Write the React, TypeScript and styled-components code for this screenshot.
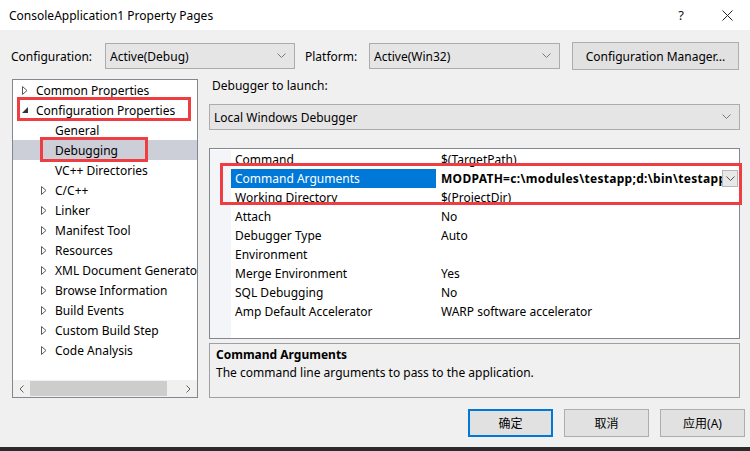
import React from 'react';
import styled, { createGlobalStyle } from 'styled-components';

const GlobalStyle = createGlobalStyle`
    html, body {
        margin: 0;
        padding: 0;
        background: #f0f0f0;
    }
    body {
        font-family: 'Noto Sans', 'Noto Sans CJK SC', sans-serif;
        font-size: 12px;
        color: #000;
    }
`;

const Window = styled.div`
    width: 750px;
    height: 451px;
    display: flex;
    flex-direction: column;
    background: #f0f0f0;
    overflow: hidden;
`;

const TitleBar = styled.div`
    height: 30px;
    flex: none;
    display: flex;
    align-items: center;
    background: #ffffff;
    padding-left: 9px;
    font-size: 12px;
`;

const Title = styled.div`
    flex: 1;
`;

const TitleButton = styled.div`
    width: 46px;
    height: 30px;
    display: flex;
    align-items: center;
    justify-content: center;
    font-size: 13px;
    color: #111;
`;

const ConfigRow = styled.div`
    margin-top: 12px;
    height: 28px;
    display: flex;
    align-items: center;
    padding-left: 11px;
`;

const Label = styled.div<{ $width: number; $gap?: number }>`
    width: ${props => props.$width}px;
    margin-left: ${props => props.$gap || 0}px;
    flex: none;
    white-space: nowrap;
`;

const Select = styled.div<{ $width?: number }>`
    ${props => (props.$width ? `width: ${props.$width}px;` : 'align-self: stretch;')}
    height: 26px;
    box-sizing: border-box;
    flex: none;
    display: flex;
    align-items: center;
    padding: 0 8px 0 4px;
    background: #e5e5e5;
    border: 1px solid #acacac;
`;

const SelectText = styled.div`
    flex: 1;
    white-space: nowrap;
    overflow: hidden;
`;

const Button = styled.div<{ $width: number; $primary?: boolean }>`
    width: ${props => props.$width}px;
    height: 28px;
    box-sizing: border-box;
    flex: none;
    display: flex;
    align-items: center;
    justify-content: center;
    background: #e1e1e1;
    border: ${props => (props.$primary ? '2px solid #0078d7' : '1px solid #adadad')};
    white-space: nowrap;
`;

const ManagerButton = styled(Button)`
    margin-left: 12px;
`;

const Main = styled.div`
    margin-top: 9px;
    height: 319px;
    display: flex;
    padding-left: 12px;
`;

const Tree = styled.div`
    width: 186px;
    box-sizing: border-box;
    border: 1px solid #828790;
    background: #ffffff;
    display: flex;
    flex-direction: column;
`;

const TreeRows = styled.div`
    flex: 1;
    overflow: hidden;
`;

const TreeRow = styled.div<{ $selected?: boolean }>`
    position: relative;
    height: 20px;
    display: flex;
    align-items: center;
    white-space: nowrap;
    background: ${props => (props.$selected ? '#ccced8' : 'transparent')};
`;

const Expander = styled.div<{ $level: number }>`
    width: 14px;
    height: 20px;
    flex: none;
    margin-left: ${props => 9 + props.$level * 19}px;
    display: flex;
    align-items: center;
`;

const RedBox = styled.div<{ $left: number; $top: number; $width: number; $height: number }>`
    position: absolute;
    left: ${props => props.$left}px;
    top: ${props => props.$top}px;
    width: ${props => props.$width}px;
    height: ${props => props.$height}px;
    box-sizing: border-box;
    border: 3px solid #ef3e42;
    pointer-events: none;
`;

const HScroll = styled.div`
    height: 17px;
    flex: none;
    display: flex;
    align-items: center;
    background: #f0f0f0;
`;

const ScrollArrow = styled.div`
    width: 17px;
    height: 17px;
    display: flex;
    align-items: center;
    justify-content: center;
`;

const ScrollThumb = styled.div`
    width: 137px;
    height: 15px;
    background: #cdcdcd;
`;

const ScrollTrack = styled.div`
    flex: 1;
`;

const RightPanel = styled.div`
    width: 531px;
    margin-left: 11px;
    display: flex;
    flex-direction: column;
`;

const SectionLabel = styled.div`
    margin-top: -1px;
    line-height: 16px;
    padding-left: 3px;
`;

const LaunchSelect = styled(Select)`
    margin-top: 10px;
    height: 26px;
`;

const Grid = styled.div`
    position: relative;
    margin-top: 18px;
    height: 191px;
    box-sizing: border-box;
    border: 1px solid #828790;
    background: #ffffff;
    padding-top: 1px;
    display: flex;
    flex-direction: column;
`;

const GridRow = styled.div`
    height: 19px;
    flex: none;
    display: grid;
    grid-template-columns: 21px 206px 1fr;
`;

const Gutter = styled.div`
    background: #f3f5f9;
`;

const GridFill = styled.div`
    flex: 1;
    display: grid;
    grid-template-columns: 21px 1fr;
`;

const NameCell = styled.div<{ $selected?: boolean }>`
    display: flex;
    align-items: center;
    padding-left: 4px;
    margin-right: 1px;
    white-space: nowrap;
    overflow: hidden;
    background: ${props => (props.$selected ? '#0078d7' : 'transparent')};
    color: ${props => (props.$selected ? '#ffffff' : '#000')};
`;

const ValueCell = styled.div<{ $bold?: boolean }>`
    display: flex;
    align-items: center;
    padding-left: 4px;
    overflow: hidden;
    font-weight: ${props => (props.$bold ? 700 : 400)};
    letter-spacing: ${props => (props.$bold ? '0.3px' : 'normal')};
`;

const ValueText = styled.div`
    flex: 1;
    white-space: nowrap;
    overflow: hidden;
`;

const DropButton = styled.div`
    width: 16px;
    height: 17px;
    flex: none;
    box-sizing: border-box;
    margin-right: 1px;
    border: 1px solid #b5b5b5;
    background: #e8e8e8;
    display: flex;
    align-items: center;
    justify-content: center;
`;

const Description = styled.div`
    margin-top: 4px;
    height: 55px;
    box-sizing: border-box;
    border: 1px solid #a0a0a0;
    padding: 2px 6px;
    line-height: 18px;
`;

const DescTitle = styled.div`
    font-weight: 700;
`;

const Footer = styled.div`
    margin-top: 11px;
    display: flex;
    justify-content: flex-end;
    gap: 11px;
    padding-right: 5px;
`;

const BottomBar = styled.div`
    margin-top: auto;
    height: 4px;
    background: #2b2b2b;
`;

const Chevron = ({ color = '#7a7a7a' }: { color?: string }) => (
    <svg width="9" height="6" viewBox="0 0 9 6">
        <path d="M0.5 0.5 L4.5 4.5 L8.5 0.5" fill="none" stroke={color} strokeWidth="1" />
    </svg>
);

const CollapsedIcon = () => (
    <svg width="6" height="9" viewBox="0 0 6 9">
        <path d="M0.5 0.5 L5 4.5 L0.5 8.5 Z" fill="none" stroke="#5a5a5a" strokeWidth="1" />
    </svg>
);

const ExpandedIcon = () => (
    <svg width="6" height="6" viewBox="0 0 6 6">
        <path d="M6 0 L6 6 L0 6 Z" fill="#333" />
    </svg>
);

type Expand = 'collapsed' | 'expanded' | 'none';

interface TreeItem {
    label: string;
    level: number;
    expand: Expand;
    selected?: boolean;
    box?: { left: number; top: number; width: number; height: number };
}

const treeItems: TreeItem[] = [
    { label: 'Common Properties', level: 0, expand: 'collapsed' },
    {
        label: 'Configuration Properties',
        level: 0,
        expand: 'expanded',
        box: { left: 4, top: -3, width: 174, height: 24 },
    },
    { label: 'General', level: 1, expand: 'none' },
    {
        label: 'Debugging',
        level: 1,
        expand: 'none',
        selected: true,
        box: { left: 27, top: -3, width: 108, height: 25 },
    },
    { label: 'VC++ Directories', level: 1, expand: 'none' },
    { label: 'C/C++', level: 1, expand: 'collapsed' },
    { label: 'Linker', level: 1, expand: 'collapsed' },
    { label: 'Manifest Tool', level: 1, expand: 'collapsed' },
    { label: 'Resources', level: 1, expand: 'collapsed' },
    { label: 'XML Document Generator', level: 1, expand: 'collapsed' },
    { label: 'Browse Information', level: 1, expand: 'collapsed' },
    { label: 'Build Events', level: 1, expand: 'collapsed' },
    { label: 'Custom Build Step', level: 1, expand: 'collapsed' },
    { label: 'Code Analysis', level: 1, expand: 'collapsed' },
];

interface Prop {
    name: string;
    value: string;
    selected?: boolean;
}

const properties: Prop[] = [
    { name: 'Command', value: '$(TargetPath)' },
    {
        name: 'Command Arguments',
        value: 'MODPATH=c:\\modules\\testapp;d:\\bin\\testapp',
        selected: true,
    },
    { name: 'Working Directory', value: '$(ProjectDir)' },
    { name: 'Attach', value: 'No' },
    { name: 'Debugger Type', value: 'Auto' },
    { name: 'Environment', value: '' },
    { name: 'Merge Environment', value: 'Yes' },
    { name: 'SQL Debugging', value: 'No' },
    { name: 'Amp Default Accelerator', value: 'WARP software accelerator' },
];

const App = () => {
    return (
        <Window>
            <GlobalStyle />
            <TitleBar>
                <Title>ConsoleApplication1 Property Pages</Title>
                <TitleButton>?</TitleButton>
                <TitleButton>
                    <svg width="11" height="11" viewBox="0 0 11 11">
                        <path d="M0.5 0.5 L10.5 10.5 M10.5 0.5 L0.5 10.5" stroke="#222" strokeWidth="1" />
                    </svg>
                </TitleButton>
            </TitleBar>

            <ConfigRow>
                <Label $width={94}>Configuration:</Label>
                <Select $width={190}>
                    <SelectText>Active(Debug)</SelectText>
                    <Chevron />
                </Select>
                <Label $width={64} $gap={10}>
                    Platform:
                </Label>
                <Select $width={191}>
                    <SelectText>Active(Win32)</SelectText>
                    <Chevron />
                </Select>
                <ManagerButton $width={167}>Configuration Manager...</ManagerButton>
            </ConfigRow>

            <Main>
                <Tree>
                    <TreeRows>
                        {treeItems.map(item => (
                            <TreeRow key={item.label} $selected={item.selected}>
                                <Expander $level={item.level}>
                                    {item.expand === 'collapsed' && <CollapsedIcon />}
                                    {item.expand === 'expanded' && <ExpandedIcon />}
                                </Expander>
                                {item.label}
                                {item.box && (
                                    <RedBox
                                        $left={item.box.left}
                                        $top={item.box.top}
                                        $width={item.box.width}
                                        $height={item.box.height}
                                    />
                                )}
                            </TreeRow>
                        ))}
                    </TreeRows>
                    <HScroll>
                        <ScrollArrow>
                            <svg width="5" height="8" viewBox="0 0 5 8">
                                <path d="M4.5 0.5 L1 4 L4.5 7.5" fill="none" stroke="#606060" />
                            </svg>
                        </ScrollArrow>
                        <ScrollThumb />
                        <ScrollTrack />
                        <ScrollArrow>
                            <svg width="5" height="8" viewBox="0 0 5 8">
                                <path d="M0.5 0.5 L4 4 L0.5 7.5" fill="none" stroke="#606060" />
                            </svg>
                        </ScrollArrow>
                    </HScroll>
                </Tree>

                <RightPanel>
                    <SectionLabel>Debugger to launch:</SectionLabel>
                    <LaunchSelect>
                        <SelectText>Local Windows Debugger</SelectText>
                        <Chevron />
                    </LaunchSelect>
                    <Grid>
                        {properties.map(prop => (
                            <GridRow key={prop.name}>
                                <Gutter />
                                <NameCell $selected={prop.selected}>{prop.name}</NameCell>
                                <ValueCell $bold={prop.selected}>
                                    <ValueText>{prop.value}</ValueText>
                                    {prop.selected && (
                                        <DropButton>
                                            <Chevron color="#555" />
                                        </DropButton>
                                    )}
                                </ValueCell>
                            </GridRow>
                        ))}
                        <GridFill>
                            <Gutter />
                        </GridFill>
                        <RedBox $left={10} $top={14} $width={522} $height={42} />
                    </Grid>
                    <Description>
                        <DescTitle>Command Arguments</DescTitle>
                        <div>The command line arguments to pass to the application.</div>
                    </Description>
                </RightPanel>
            </Main>

            <Footer>
                <Button $width={85} $primary>
                    确定
                </Button>
                <Button $width={85}>取消</Button>
                <Button $width={85}>应用(A)</Button>
            </Footer>
            <BottomBar />
        </Window>
    );
};

export default App;
